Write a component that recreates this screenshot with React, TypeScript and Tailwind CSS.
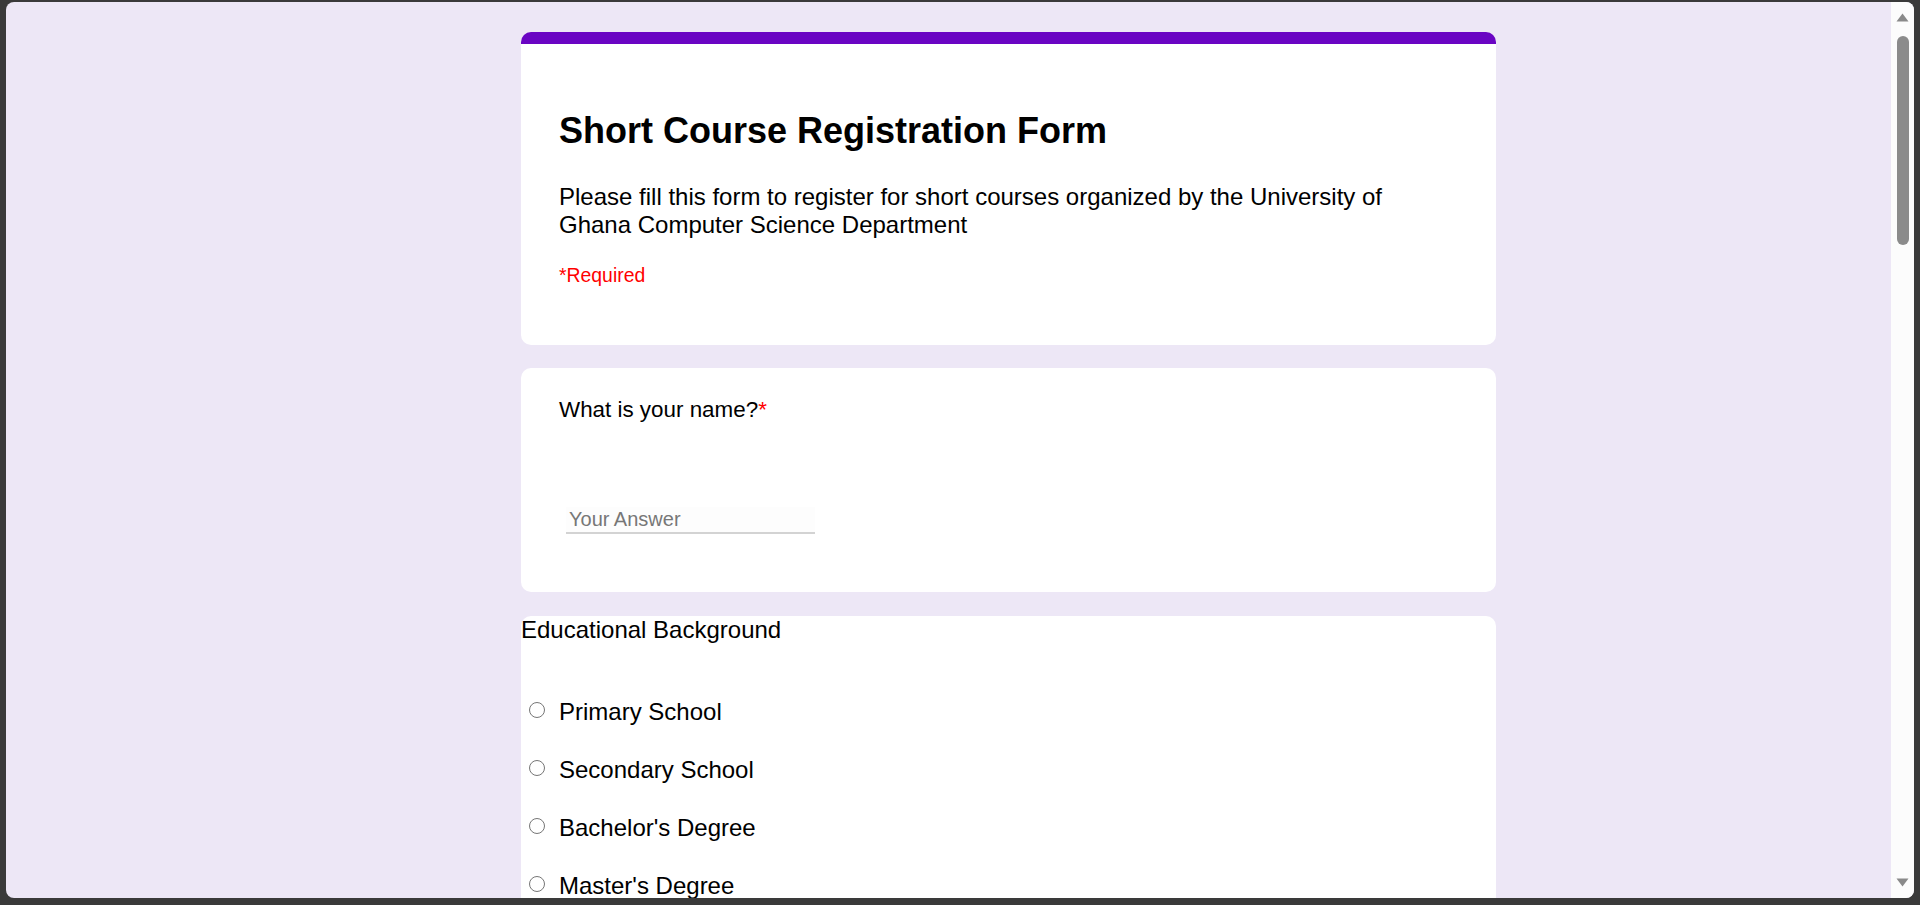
import React from "react";

function Radio({ label }: { label: string }) {
  return (
    <div className="flex items-center h-[58px]">
      <span className="ml-[8px] mr-[14px] mb-[4px] w-[16px] h-[16px] rounded-full border border-[#767676] bg-white shrink-0" />
      <span className="text-[24px] leading-[27.6px] text-black">{label}</span>
    </div>
  );
}

export default function App() {
  return (
    <div className="w-[1920px] h-[905px] bg-[#3a3a3a] pt-[2px] pl-[6px] pr-[6px] pb-[7px] overflow-hidden font-['Liberation_Sans',Arial,sans-serif]">
      <div className="h-full rounded-[8px] overflow-hidden bg-[#ede7f6] flex">
        <div className="flex-1 overflow-hidden">
          <div className="ml-[515px] w-[975px] pt-[30px]">
            {/* Header card */}
            <div className="bg-white rounded-[10px] border-t-[12px] border-[#6a05c3] pl-[38px] pr-[60px] pt-[66px] pb-[59px]">
              <h1 className="text-[36px] leading-[41.4px] font-bold text-black">
                Short Course Registration Form
              </h1>
              <p className="mt-[32px] text-[24px] leading-[27.6px] text-black">
                Please fill this form to register for short courses organized by the University of Ghana Computer Science Department
              </p>
              <p className="mt-[25px] text-[19.4px] leading-[22px] text-[#ff0000]">*Required</p>
            </div>

            {/* Name card */}
            <div className="mt-[23px] bg-white rounded-[10px] pl-[38px] pr-[38px] pt-[29px] pb-[58px]">
              <div className="text-[22.4px] leading-[26px] text-black">
                What is your name?<span className="text-[#ff0000]">*</span>
              </div>
              <input
                type="text"
                placeholder="Your Answer"
                className="mt-[84px] ml-[7px] w-[249px] h-[27px] px-[3px] border-b-2 border-[#d3d3d3] bg-[#fdfdfd] text-[20px] leading-[23px] outline-none placeholder:text-[#777777] block"
              />
            </div>

            {/* Education card */}
            <div className="mt-[24px] bg-white rounded-[10px] pb-[40px]">
              <div className="text-[24px] leading-[27.6px] text-black">Educational Background</div>
              <div className="mt-[40px] flex flex-col">
                <Radio label="Primary School" />
                <Radio label="Secondary School" />
                <Radio label="Bachelor's Degree" />
                <Radio label="Master's Degree" />
              </div>
            </div>
          </div>
        </div>

        {/* Scrollbar */}
        <div className="w-[23px] bg-[#fcfcfc] flex flex-col items-center pb-[11px] shrink-0">
          <svg width="13" height="9" viewBox="0 0 13 9" className="mt-[11px]">
            <path d="M6.5 0.5 L12.5 8.5 L0.5 8.5 Z" fill="#8a8a8a" />
          </svg>
          <div className="mt-[14px] w-[12px] h-[209px] rounded-full bg-[#8b8b8b]" />
          <div className="flex-1" />
          <svg width="13" height="9" viewBox="0 0 13 9">
            <path d="M0.5 0.5 L12.5 0.5 L6.5 8.5 Z" fill="#8a8a8a" />
          </svg>
        </div>
      </div>
    </div>
  );
}
